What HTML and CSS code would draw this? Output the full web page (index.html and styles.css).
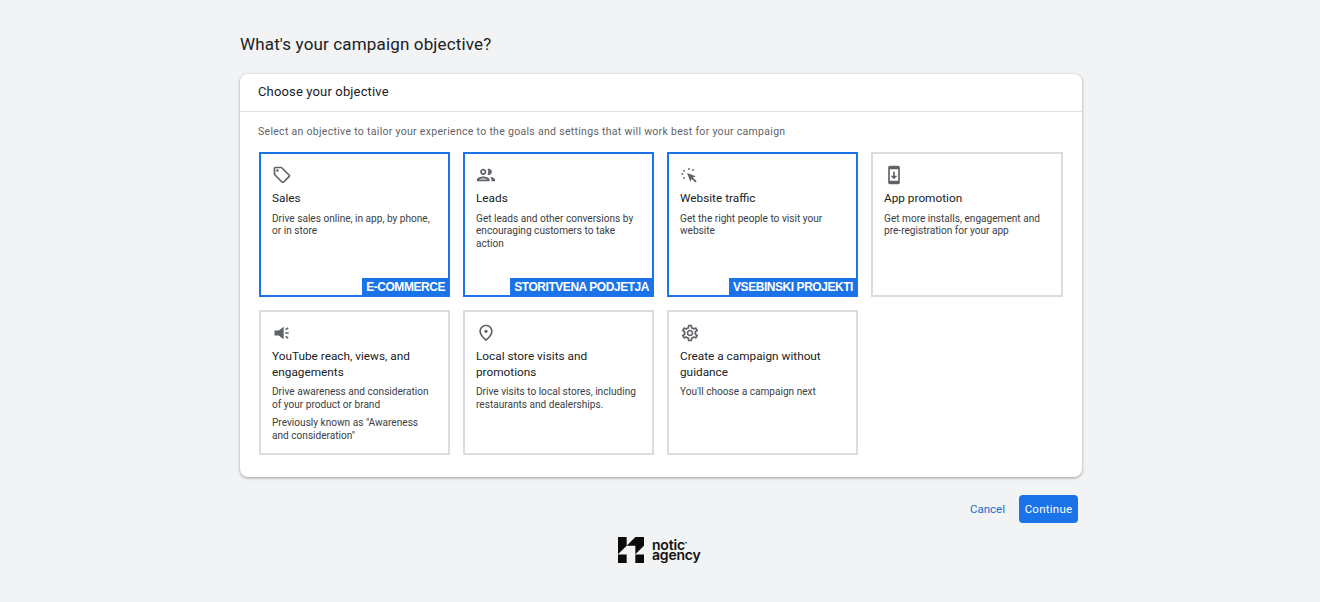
FILE: index.html
```html
<!DOCTYPE html>
<html lang="en">
<head>
    <meta charset="UTF-8">
    <meta name="viewport" content="width=device-width, initial-scale=1.0">
    <title>Campaign objective</title>
    <link rel="stylesheet" href="styles.css">
</head>
<body>
    <div class="page">
        <h1 class="page-title">What's your campaign objective?</h1>

        <div class="panel">
            <h2 class="panel-title">Choose your objective</h2>
            <div class="panel-body">
                <p class="intro">Select an objective to tailor your experience to the goals and settings that will work best for your campaign</p>

                <div class="card-grid">
                    <div class="card selected">
                        <svg class="icon" viewBox="0 0 24 24"><path d="M21.41 11.58l-9-9C12.05 2.22 11.55 2 11 2H4c-1.1 0-2 .9-2 2v7c0 .55.22 1.05.59 1.42l9 9c.36.36.86.58 1.41.58s1.05-.22 1.41-.59l7-7c.37-.36.59-.86.59-1.41s-.23-1.06-.59-1.42zM13 20.01L4 11V4h7v-.01l9 8.99-7 7.02z"/><circle cx="6.5" cy="6.5" r="1.5"/></svg>
                        <h3 class="card-title">Sales</h3>
                        <p class="card-text">Drive sales online, in app, by phone, or in store</p>
                        <span class="ribbon">E-COMMERCE</span>
                    </div>

                    <div class="card selected">
                        <svg class="icon" viewBox="1 1 22 22"><path d="M9 13.75c-2.34 0-7 1.17-7 3.5V19h14v-1.75c0-2.33-4.66-3.5-7-3.5zM4.34 17c.84-.58 2.87-1.25 4.66-1.25s3.82.67 4.66 1.25H4.34zM9 12c1.93 0 3.5-1.57 3.5-3.5S10.93 5 9 5 5.5 6.57 5.5 8.5 7.07 12 9 12zm0-5c.83 0 1.5.67 1.5 1.5S9.83 10 9 10s-1.5-.67-1.5-1.5S8.17 7 9 7zm7.04 6.81c1.16.84 1.96 1.96 1.96 3.44V19h4v-1.75c0-2.02-3.5-3.17-5.96-3.44zM15 12c1.93 0 3.5-1.57 3.5-3.5S16.93 5 15 5c-.54 0-1.04.13-1.5.35.63.89 1 1.98 1 3.15s-.37 2.26-1 3.15c.46.22.96.35 1.5.35z"/></svg>
                        <h3 class="card-title">Leads</h3>
                        <p class="card-text">Get leads and other conversions by encouraging customers to take action</p>
                        <span class="ribbon">STORITVENA PODJETJA</span>
                    </div>

                    <div class="card selected">
                        <svg class="icon" viewBox="0 0 24 24"><path d="M8.4 9.6L19 13.5 15.5 15l4.5 4.5-1.5 1.5-4.5-4.5-1.5 3.5z"/><circle cx="10.8" cy="4.8" r="1.1"/><circle cx="15.6" cy="6" r="1.1"/><circle cx="4.8" cy="7.2" r="1.1"/><circle cx="2.8" cy="10.8" r="1.1"/><circle cx="4.8" cy="15.6" r="1.1"/></svg>
                        <h3 class="card-title">Website traffic</h3>
                        <p class="card-text">Get the right people to visit your website</p>
                        <span class="ribbon">VSEBINSKI PROJEKTI</span>
                    </div>

                    <div class="card">
                        <svg class="icon" viewBox="0 0 24 24"><path d="M17 1.01L7 1c-1.1 0-2 .9-2 2v18c0 1.1.9 2 2 2h10c1.1 0 2-.9 2-2V3c0-1.1-.9-1.99-2-1.99zM17 19H7V5h10v14zm-1-6h-3V8h-2v5H8l4 4 4-4z"/></svg>
                        <h3 class="card-title">App promotion</h3>
                        <p class="card-text">Get more installs, engagement and pre-registration for your app</p>
                    </div>

                    <div class="card">
                        <svg class="icon" viewBox="0 0 24 24"><path d="M3 9h5l6-4.5v15L8 15H3z"/><path d="M16 11h4v2h-4zM15.8 7.2l3-2.2 1.2 1.6-3 2.2zM15.8 16.8l1.2-1.6 3 2.2-1.2 1.6z"/></svg>
                        <h3 class="card-title">YouTube reach, views, and engagements</h3>
                        <p class="card-text">Drive awareness and consideration of your product or brand</p>
                        <p class="card-text note">Previously known as "Awareness and consideration"</p>
                    </div>

                    <div class="card">
                        <svg class="icon" viewBox="0 0 24 24"><path d="M12 12c-1.1 0-2-.9-2-2s.9-2 2-2 2 .9 2 2-.9 2-2 2zm6-1.8C18 6.57 15.35 4 12 4s-6 2.57-6 6.2c0 2.34 1.95 5.44 6 9.14 4.05-3.7 6-6.8 6-9.14zM12 2c4.2 0 8 3.22 8 8.2 0 3.32-2.67 7.25-8 11.8-5.33-4.55-8-8.48-8-11.8C4 5.22 7.8 2 12 2z"/></svg>
                        <h3 class="card-title">Local store visits and promotions</h3>
                        <p class="card-text">Drive visits to local stores, including restaurants and dealerships.</p>
                    </div>

                    <div class="card">
                        <svg class="icon" viewBox="0 0 24 24"><path d="M19.43 12.98c.04-.32.07-.64.07-.98 0-.34-.03-.66-.07-.98l2.11-1.65c.19-.15.24-.42.12-.64l-2-3.46c-.09-.16-.26-.25-.44-.25-.06 0-.12.01-.17.03l-2.49 1c-.52-.4-1.08-.73-1.69-.98l-.38-2.65C14.46 2.18 14.25 2 14 2h-4c-.25 0-.46.18-.49.42l-.38 2.65c-.61.25-1.17.59-1.69.98l-2.49-1c-.06-.02-.12-.03-.18-.03-.17 0-.34.09-.43.25l-2 3.46c-.13.22-.07.49.12.64l2.11 1.65c-.04.32-.07.65-.07.98 0 .33.03.66.07.98l-2.11 1.65c-.19.15-.24.42-.12.64l2 3.46c.09.16.26.25.44.25.06 0 .12-.01.17-.03l2.49-1c.52.4 1.08.73 1.69.98l.38 2.65c.03.24.24.42.49.42h4c.25 0 .46-.18.49-.42l.38-2.65c.61-.25 1.17-.59 1.69-.98l2.49 1c.06.02.12.03.18.03.17 0 .34-.09.43-.25l2-3.46c.12-.22.07-.49-.12-.64l-2.11-1.65zm-1.98-1.71c.04.31.05.52.05.73 0 .21-.02.43-.05.73l-.14 1.13.89.7 1.08.84-.7 1.21-1.27-.51-1.04-.42-.9.68c-.43.32-.84.56-1.25.73l-1.06.43-.16 1.13-.2 1.35h-1.4l-.19-1.35-.16-1.13-1.06-.43c-.43-.18-.83-.41-1.23-.71l-.91-.7-1.06.43-1.27.51-.7-1.21 1.08-.84.89-.7-.14-1.13c-.03-.31-.05-.54-.05-.74s.02-.43.05-.73l.14-1.13-.89-.7-1.08-.84.7-1.21 1.27.51 1.04.42.9-.68c.43-.32.84-.56 1.25-.73l1.06-.43.16-1.13.2-1.35h1.39l.19 1.35.16 1.13 1.06.43c.43.18.83.41 1.23.71l.91.7 1.06-.43 1.27-.51.7 1.21-1.07.85-.89.7.14 1.13zM12 8c-2.21 0-4 1.79-4 4s1.79 4 4 4 4-1.79 4-4-1.79-4-4-4zm0 6c-1.1 0-2-.9-2-2s.9-2 2-2 2 .9 2 2-.9 2-2 2z"/></svg>
                        <h3 class="card-title">Create a campaign without guidance</h3>
                        <p class="card-text">You'll choose a campaign next</p>
                    </div>
                </div>
            </div>
        </div>

        <div class="actions">
            <a class="cancel">Cancel</a>
            <button class="continue">Continue</button>
        </div>

        <div class="brand">
            <svg class="brand-mark" viewBox="0 0 3 3"><path d="M0 0h1v1L0 2zM0 2.03h1V3H0zM1 1l1-1h1v1L2 2V1zM2 2.03h1V3H2z"/></svg>
            <div class="brand-name">notic<sup class="brand-dot">•</sup><br>agency</div>
        </div>
    </div>
</body>
</html>
```

FILE: styles.css
```css
body {
    margin: 0;
    background: #f1f3f4;
    font-family: Roboto, "Liberation Sans", sans-serif;
    color: #202124;
}

.page {
    width: 842px;
    margin-left: 240px;
}

.page-title {
    margin: 0;
    padding-top: 33px;
    height: 41px;
    font-size: 17px;
    line-height: 22px;
    font-weight: 400;
    letter-spacing: 0.15px;
}

.panel {
    background: white;
    border-radius: 8px;
    box-shadow: 0 1px 2px rgba(60,64,67,0.3), 0 1px 3px 1px rgba(60,64,67,0.15);
}

.panel-title {
    margin: 0;
    height: 37px;
    padding-left: 18px;
    border-bottom: 1px solid #e0e0e0;
    font-size: 13px;
    line-height: 36px;
    font-weight: 400;
    letter-spacing: 0.15px;
}

.panel-body {
    padding: 13px 19px 22px 19px;
}

.intro {
    margin: 0 0 13px -1px;
    font-size: 10.5px;
    line-height: 14px;
    letter-spacing: 0.3px;
    color: #5f6368;
}

.card-grid {
    display: grid;
    grid-template-columns: repeat(3, 191px) 192px;
    grid-auto-rows: 145px;
    gap: 13px;
}

.card {
    position: relative;
    box-sizing: border-box;
    padding: 11px 11px 0 11px;
    border: 2px solid #dadce0;
}

.card.selected {
    border-color: #1a73e8;
}

.icon {
    display: block;
    width: 20px;
    height: 20px;
    fill: #5f6368;
}

.card-title {
    margin: 6px 0 6px 0;
    font-size: 11.8px;
    line-height: 15.5px;
    font-weight: 400;
}

.card-text {
    margin: 0;
    font-size: 10.1px;
    line-height: 12.5px;
    color: #3c4043;
}

.card-text.note {
    margin-top: 6px;
}

.ribbon {
    position: absolute;
    right: -2px;
    bottom: -2px;
    padding: 0 5px 0 4px;
    background: #1a73e8;
    color: white;
    font-family: "Liberation Sans", sans-serif;
    font-size: 12px;
    line-height: 19px;
    font-weight: 700;
    letter-spacing: -0.45px;
}

.actions {
    display: flex;
    justify-content: flex-end;
    align-items: center;
    gap: 14px;
    margin-top: 18px;
    padding-right: 4px;
}

.cancel {
    font-size: 11.5px;
    color: #1a6fd0;
}

.continue {
    width: 59px;
    height: 28px;
    padding: 0;
    border: 0;
    border-radius: 4px;
    background: #1a73e8;
    color: white;
    font-family: inherit;
    font-size: 11.5px;
    font-weight: 400;
    letter-spacing: 0.25px;
}

.brand {
    display: flex;
    align-items: center;
    gap: 8px;
    width: 84px;
    margin: 14px 0 0 378px;
}

.brand-mark {
    flex: none;
    width: 26px;
    height: 26px;
    fill: #0b0b0b;
}

.brand-name {
    font-family: Inter, sans-serif;
    font-size: 14px;
    line-height: 10px;
    font-weight: 600;
    color: #111;
    letter-spacing: -0.2px;
}

.brand-dot {
    font-size: 5px;
    line-height: 0;
    vertical-align: 6px;
}
```
